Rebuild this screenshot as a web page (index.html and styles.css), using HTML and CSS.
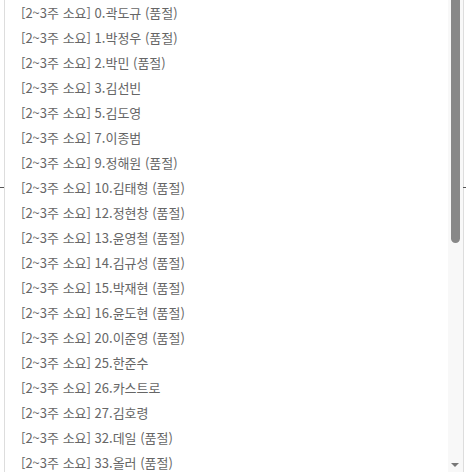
FILE: index.html
```html
<!DOCTYPE html>
<html lang="ko">
<head>
    <meta charset="UTF-8">
    <meta name="viewport" content="width=device-width, initial-scale=1.0">
    <title>상품 옵션</title>
    <link rel="stylesheet" href="styles.css">
</head>
<body>
    <div class="page">
        <span class="tick tick-left"></span>
        <div class="dropdown">
            <ul class="options">
                <li>[2~3주 소요] 0.곽도규 (품절)</li>
                <li>[2~3주 소요] 1.박정우 (품절)</li>
                <li>[2~3주 소요] 2.박민 (품절)</li>
                <li>[2~3주 소요] 3.김선빈</li>
                <li>[2~3주 소요] 5.김도영</li>
                <li>[2~3주 소요] 7.이종범</li>
                <li>[2~3주 소요] 9.정해원 (품절)</li>
                <li>[2~3주 소요] 10.김태형 (품절)</li>
                <li>[2~3주 소요] 12.정현창 (품절)</li>
                <li>[2~3주 소요] 13.윤영철 (품절)</li>
                <li>[2~3주 소요] 14.김규성 (품절)</li>
                <li>[2~3주 소요] 15.박재현 (품절)</li>
                <li>[2~3주 소요] 16.윤도현 (품절)</li>
                <li>[2~3주 소요] 20.이준영 (품절)</li>
                <li>[2~3주 소요] 25.한준수</li>
                <li>[2~3주 소요] 26.카스트로</li>
                <li>[2~3주 소요] 27.김호령</li>
                <li>[2~3주 소요] 32.데일 (품절)</li>
                <li>[2~3주 소요] 33.올러 (품절)</li>
            </ul>
            <div class="scrollbar">
                <div class="thumb"></div>
                <div class="arrow-down"></div>
            </div>
        </div>
        <span class="tick tick-right"></span>
    </div>
</body>
</html>
```

FILE: styles.css
```css
body {
    margin: 0;
    background: #fff;
    font-family: "Noto Sans CJK KR", "Noto Sans", sans-serif;
    overflow: hidden;
}

.page {
    position: relative;
    height: 472px;
    padding-left: 4px;
}

.dropdown {
    display: flex;
    width: 458px;
    height: 472px;
    border-left: 1px solid #ddd;
    border-right: 1px solid #ddd;
    overflow: hidden;
}

.options {
    flex: 1;
    list-style: none;
    margin: 0;
    padding: 0;
}

.options li {
    height: 25px;
    line-height: 25px;
    padding-left: 16px;
    font-size: 13px;
    color: #666;
    white-space: nowrap;
}

.scrollbar {
    position: relative;
    width: 15px;
    background: #f8f8f8;
}

.thumb {
    margin: 0 auto;
    width: 9px;
    height: 243px;
    background: #888;
    border-radius: 0 0 5px 5px;
}

.arrow-down {
    position: absolute;
    left: 3px;
    bottom: 5px;
    width: 0;
    height: 0;
    border-left: 4px solid transparent;
    border-right: 4px solid transparent;
    border-top: 4px solid #777;
}

.tick {
    position: absolute;
    top: 187px;
    height: 1px;
    width: 4px;
    background: #555;
}

.tick-left {
    left: 0;
}

.tick-right {
    right: 0;
    width: 3px;
}
```
